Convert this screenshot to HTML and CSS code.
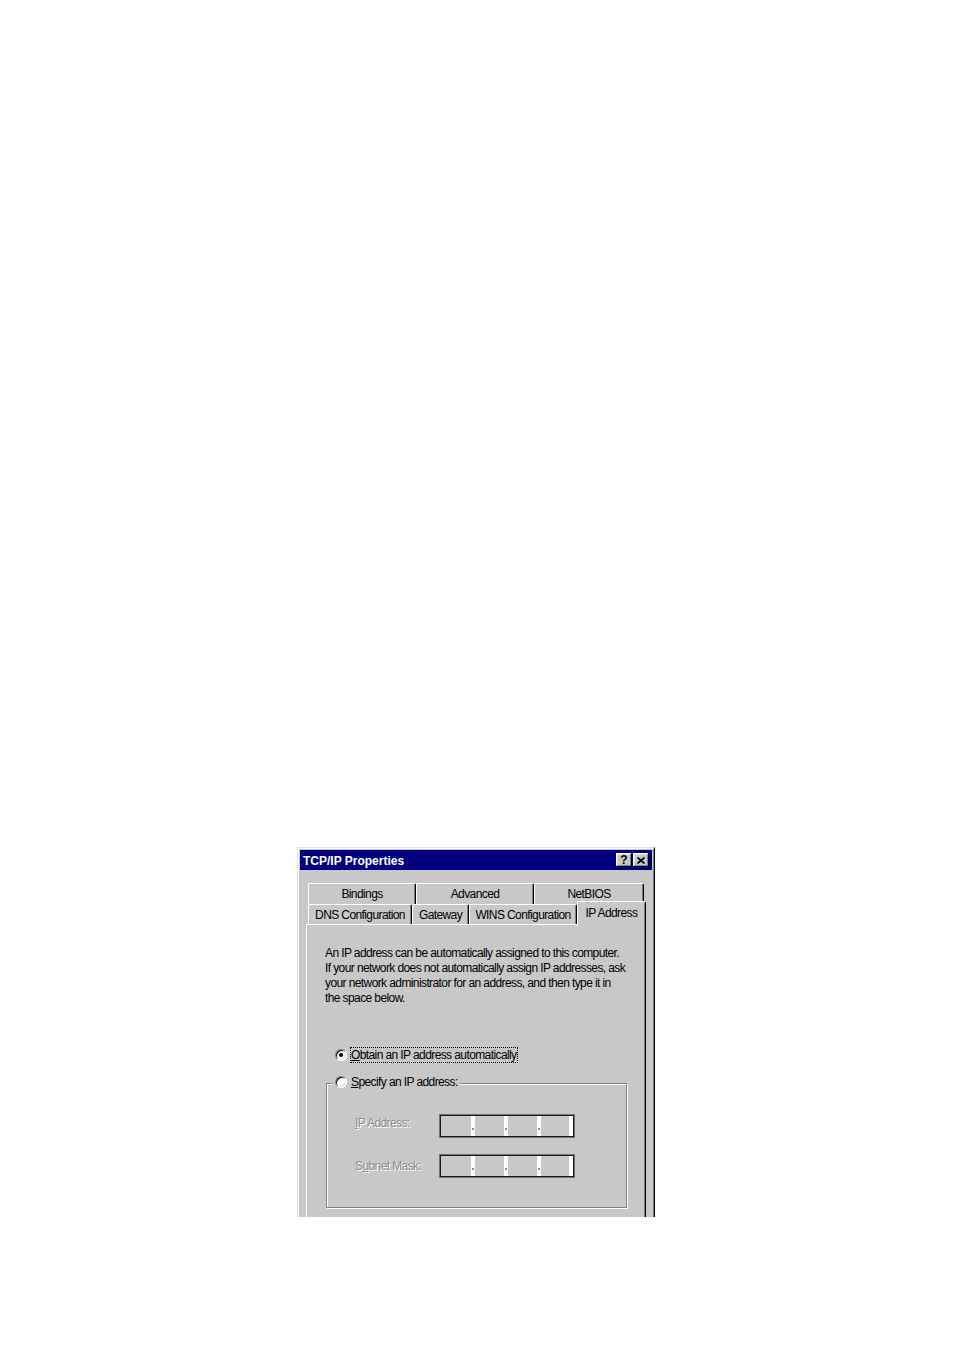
FILE: index.html
```html
<!DOCTYPE html>
<html>
<head>
<meta charset="utf-8">
<link rel="stylesheet" href="styles.css">
</head>
<body>
<div class="page">
  <div class="clip">
    <div class="dialog">
      <div class="titlebar">
        <span class="title">TCP/IP Properties</span>
        <div class="tbtns">
          <span class="tbtn help">?</span>
          <span class="tbtn close"><svg width="8" height="7" viewBox="0 0 8 7"><path d="M0.5 0.5 L7.5 6.5 M7.5 0.5 L0.5 6.5" stroke="#000" stroke-width="1.7" fill="none"/></svg></span>
        </div>
      </div>
      <div class="tabs">
        <div class="tabrow row1">
          <div class="tab">Bindings</div>
          <div class="tab">Advanced</div>
          <div class="tab">NetBIOS</div>
        </div>
        <div class="tabrow row2">
          <div class="tab">DNS Configuration</div>
          <div class="tab">Gateway</div>
          <div class="tab">WINS Configuration</div>
          <div class="tab sel">IP Address</div>
        </div>
      </div>
      <div class="panel">
        <p class="desc">An IP address can be automatically assigned to this computer.<br>If your network does not automatically assign IP addresses, ask<br>your network administrator for an address, and then type it in<br>the space below.</p>
        <div class="radio-row first">
          <span class="radio checked"></span>
          <span class="rlabel focus"><u>O</u>btain an IP address automatically</span>
        </div>
        <div class="group">
          <div class="radio-row legend">
            <span class="radio"></span>
            <span class="rlabel"><u>S</u>pecify an IP address:</span>
          </div>
          <div class="fields">
            <span class="flabel up"><u>I</u>P Address:</span>
            <div class="ipbox">
              <span class="seg s1"></span><span class="sep"><i></i></span>
              <span class="seg s2"></span><span class="sep"><i></i></span>
              <span class="seg s3"></span><span class="sep"><i></i></span>
              <span class="seg s4"></span><span class="endw"></span>
            </div>
            <span class="flabel">S<u>u</u>bnet Mask:</span>
            <div class="ipbox">
              <span class="seg s1"></span><span class="sep"><i></i></span>
              <span class="seg s2"></span><span class="sep"><i></i></span>
              <span class="seg s3"></span><span class="sep"><i></i></span>
              <span class="seg s4"></span><span class="endw"></span>
            </div>
          </div>
        </div>
      </div>
    </div>
  </div>
</div>
</body>
</html>
```
FILE: styles.css
```css
body {
  margin: 0;
  background: #fff;
  font-family: "Liberation Sans", Arial, sans-serif;
  font-size: 12px;
  color: #000;
}
.page {
  padding: 847px 0 0 297px;
}
.clip {
  width: 358px;
  height: 370px;
  overflow: hidden;
}
.dialog {
  box-sizing: border-box;
  width: 358px;
  height: 430px;
  background: #c8c8c8;
  border: 1px solid;
  border-color: #dfdfdf #000 #000 #dfdfdf;
  box-shadow: inset 1px 1px #fff, inset -1px -1px #808080;
  padding: 2px;
}
.titlebar {
  height: 20px;
  background: #000080;
  display: flex;
  align-items: center;
  justify-content: space-between;
  padding: 0 3px;
}
.title {
  color: #fff;
  font-weight: bold;
  font-size: 12px;
  padding-top: 1px;
}
.tbtns {
  display: flex;
  gap: 1px;
}
.tbtn {
  box-sizing: border-box;
  width: 16px;
  height: 14px;
  background: #c8c8c8;
  box-shadow: inset -1px -1px #000, inset 1px 1px #fff, inset -2px -2px #808080, inset 2px 2px #dfdfdf;
  display: flex;
  align-items: center;
  justify-content: center;
  font-weight: bold;
  font-size: 12px;
  line-height: 12px;
}
.tbtn.help {
  padding-bottom: 1px;
}
.tbtn svg {
  display: block;
}
.tabs {
  margin: 13px 0 0 8px;
}
.tabrow {
  display: grid;
  align-items: start;
}
.row1 {
  grid-template-columns: 108px 118px 110px;
}
.row2 {
  grid-template-columns: 104px 57px 108px 69px;
}
.tab {
  box-sizing: border-box;
  border-left: 1px solid #fff;
  border-top: 1px solid #fff;
  border-right: 1px solid #000;
  box-shadow: inset -1px 0 #808080;
  border-radius: 2px 2px 0 0;
  text-align: center;
  letter-spacing: -0.6px;
  background: #c8c8c8;
  white-space: nowrap;
  overflow: hidden;
}
.row1 .tab {
  height: 21px;
  line-height: 20px;
}
.row2 .tab {
  height: 20px;
  line-height: 20px;
}
.row2 .tab.sel {
  height: 25px;
  margin-top: -3px;
  margin-bottom: -2px;
  line-height: 22px;
  position: relative;
  z-index: 1;
}
.panel {
  margin: 0 6px;
  height: 320px;
  border: 1px solid;
  border-color: #fff #000 #000 #fff;
  box-shadow: inset -1px 0 #808080;
  padding: 21px 0 0 18px;
  letter-spacing: -0.6px;
}
.desc {
  margin: 0;
  line-height: 15px;
  white-space: nowrap;
}
.radio-row {
  display: flex;
  align-items: center;
  height: 15px;
}
.radio-row.first {
  margin: 41px 0 0 10px;
}
.radio {
  box-sizing: border-box;
  width: 12px;
  height: 12px;
  flex: none;
  border-radius: 50%;
  background: #fff;
  border: 1px solid;
  border-color: #808080 #fff #fff #808080;
  box-shadow: inset 1px 1px #000, inset -1px -1px #dfdfdf;
  display: flex;
  align-items: center;
  justify-content: center;
}
.radio.checked::after {
  content: "";
  width: 4px;
  height: 4px;
  border-radius: 50%;
  background: #000;
}
.rlabel {
  margin-left: 4px;
  line-height: 14px;
  white-space: nowrap;
  padding-top: 1px;
}
.rlabel.focus {
  margin-left: 3px;
  border: 1px dotted #000;
  padding-right: 1px;
  padding-top: 1px;
  line-height: 13px;
}
.group {
  box-sizing: border-box;
  width: 301px;
  margin: 21px 0 0 1px;
  border: 1px solid #808080;
  box-shadow: inset 1px 1px #fff, 1px 1px #fff;
  padding-bottom: 29px;
}
.radio-row.legend {
  width: fit-content;
  margin: -10px 0 0 6px;
  padding: 0 2px;
  background: #c8c8c8;
}
.fields {
  display: grid;
  grid-template-columns: 84px 136px;
  grid-auto-rows: 24px;
  row-gap: 16px;
  align-items: center;
  margin-top: 25px;
  padding-left: 28px;
}
.flabel {
  color: #8c8c8c;
  text-shadow: 1px 1px #fff;
  white-space: nowrap;
}
.flabel.up {
  margin-bottom: 6px;
}
.ipbox {
  box-sizing: border-box;
  width: 136px;
  height: 24px;
  border: 1px solid #707070;
  box-shadow: inset 0 0 0 1px #1a1a1a;
  padding: 1px;
  display: flex;
}
.seg {
  background: #c8c8c8;
}
.s1 { width: 30px; }
.s2 { width: 29px; }
.s3 { width: 29px; }
.s4 { width: 28px; }
.sep {
  width: 4px;
  background: #fff;
  display: flex;
  align-items: flex-end;
  justify-content: center;
  padding-bottom: 6px;
  box-sizing: border-box;
}
.sep i {
  width: 2px;
  height: 2px;
  background: #8c8c8c;
}
.endw {
  width: 4px;
  background: #fff;
}
```
